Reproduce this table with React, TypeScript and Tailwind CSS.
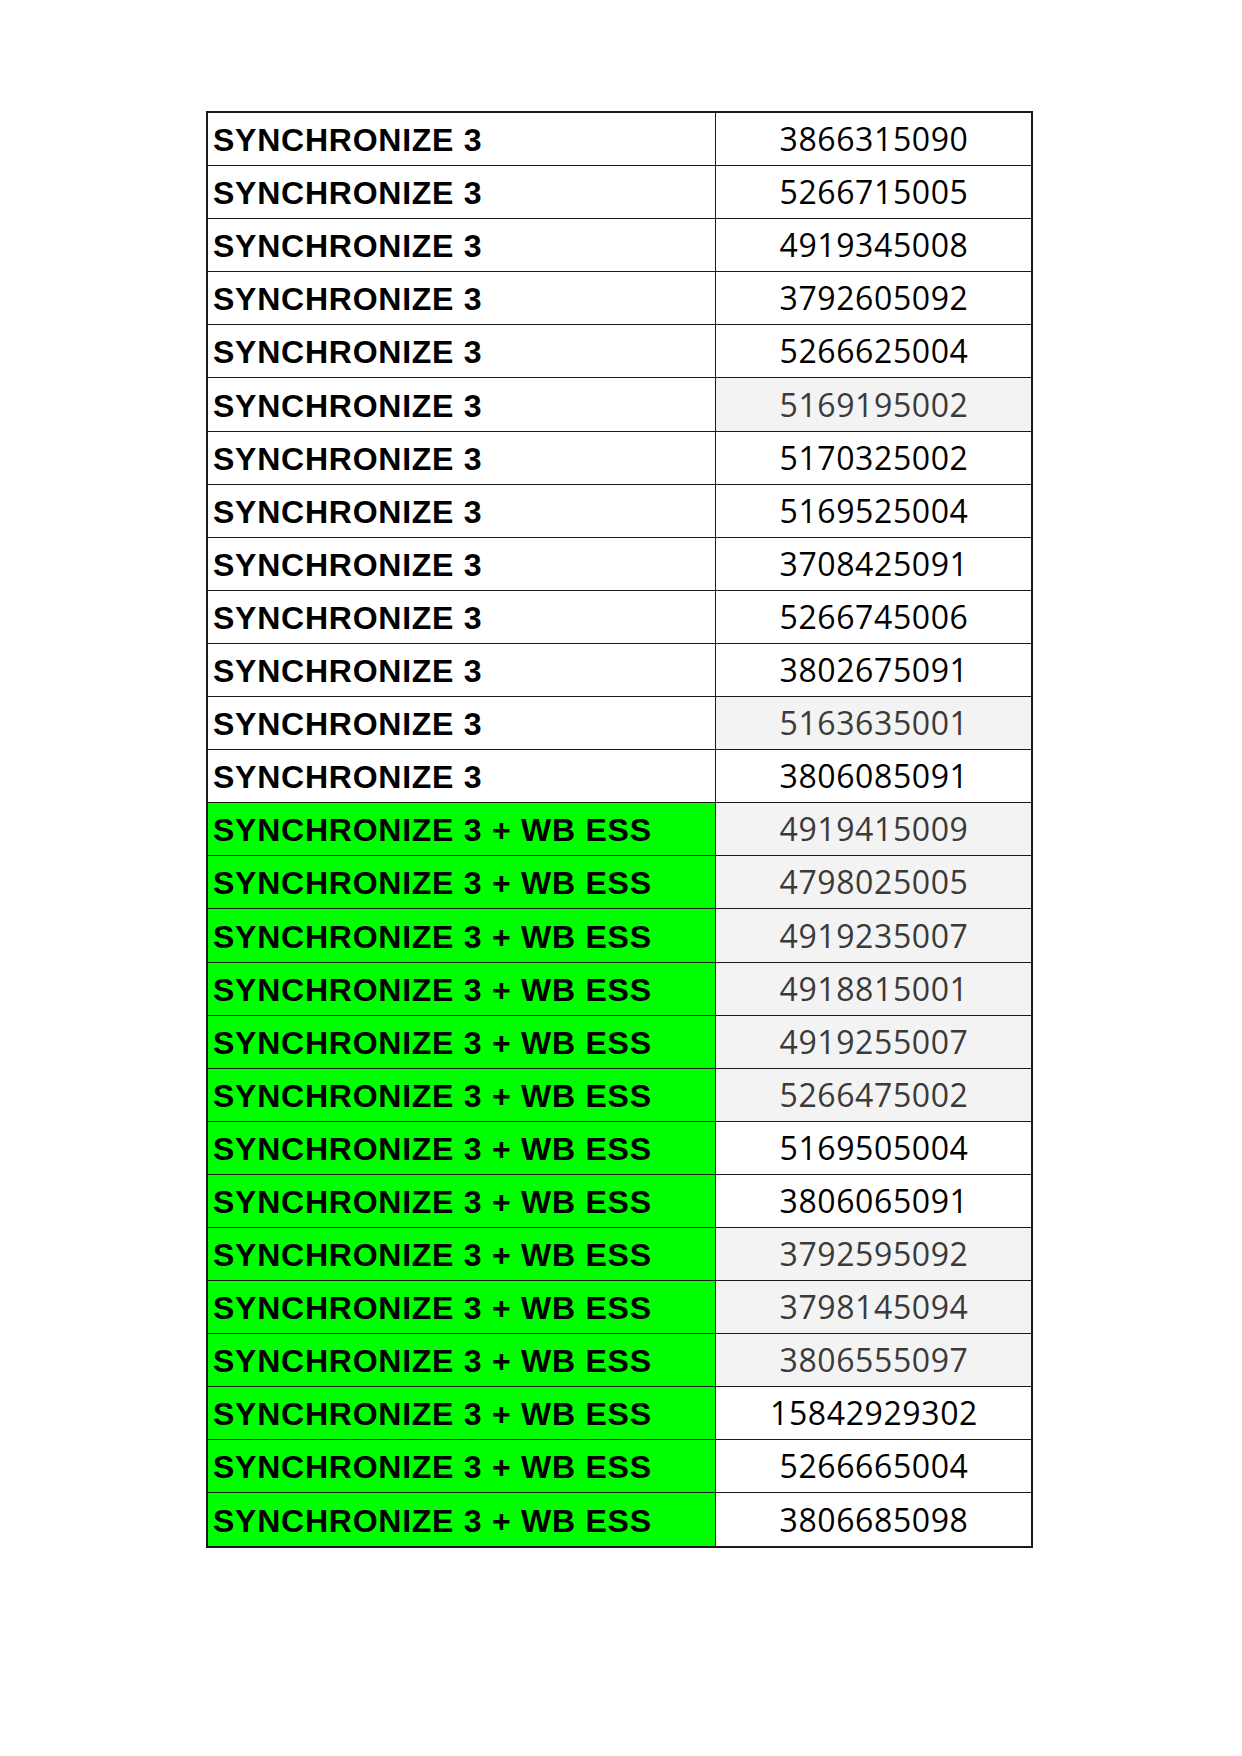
const rows: { name: string; code: string; green?: boolean; gray?: boolean }[] = [
  { name: "SYNCHRONIZE 3", code: "3866315090" },
  { name: "SYNCHRONIZE 3", code: "5266715005" },
  { name: "SYNCHRONIZE 3", code: "4919345008" },
  { name: "SYNCHRONIZE 3", code: "3792605092" },
  { name: "SYNCHRONIZE 3", code: "5266625004" },
  { name: "SYNCHRONIZE 3", code: "5169195002", gray: true },
  { name: "SYNCHRONIZE 3", code: "5170325002" },
  { name: "SYNCHRONIZE 3", code: "5169525004" },
  { name: "SYNCHRONIZE 3", code: "3708425091" },
  { name: "SYNCHRONIZE 3", code: "5266745006" },
  { name: "SYNCHRONIZE 3", code: "3802675091" },
  { name: "SYNCHRONIZE 3", code: "5163635001", gray: true },
  { name: "SYNCHRONIZE 3", code: "3806085091" },
  { name: "SYNCHRONIZE 3 + WB ESS", code: "4919415009", green: true, gray: true },
  { name: "SYNCHRONIZE 3 + WB ESS", code: "4798025005", green: true, gray: true },
  { name: "SYNCHRONIZE 3 + WB ESS", code: "4919235007", green: true, gray: true },
  { name: "SYNCHRONIZE 3 + WB ESS", code: "4918815001", green: true, gray: true },
  { name: "SYNCHRONIZE 3 + WB ESS", code: "4919255007", green: true, gray: true },
  { name: "SYNCHRONIZE 3 + WB ESS", code: "5266475002", green: true, gray: true },
  { name: "SYNCHRONIZE 3 + WB ESS", code: "5169505004", green: true },
  { name: "SYNCHRONIZE 3 + WB ESS", code: "3806065091", green: true },
  { name: "SYNCHRONIZE 3 + WB ESS", code: "3792595092", green: true, gray: true },
  { name: "SYNCHRONIZE 3 + WB ESS", code: "3798145094", green: true, gray: true },
  { name: "SYNCHRONIZE 3 + WB ESS", code: "3806555097", green: true, gray: true },
  { name: "SYNCHRONIZE 3 + WB ESS", code: "15842929302", green: true },
  { name: "SYNCHRONIZE 3 + WB ESS", code: "5266665004", green: true },
  { name: "SYNCHRONIZE 3 + WB ESS", code: "3806685098", green: true },
];

export default function App() {
  return (
    <div className="w-[1242px] h-[1756px] bg-white pt-[111px] pl-[206px]">
      <div className="w-[827px] border-2 border-[#1a1a1a] border-b-[1px]">
        {rows.map((r, i) => (
          <div key={i} className="flex h-[53.1px] border-b-[1.5px] border-[#1a1a1a]">
            <div
              className={`w-[508px] shrink-0 border-r-[1.5px] border-[#1a1a1a] pl-[5px] flex items-end pb-[5px] ${
                r.green ? "bg-[#00ff00]" : "bg-white"
              }`}
            >
              <span className="font-['Liberation_Sans',Arial,sans-serif] font-bold text-[32px] leading-[40px] tracking-[0.75px] text-black">
                {r.name}
              </span>
            </div>
            <div
              className={`flex-1 flex items-end justify-center pb-[6px] pl-[1px] ${
                r.gray ? "bg-[#f3f3f3] text-[#3a3a3a]" : "bg-white text-black"
              }`}
            >
              <span className="font-['Open_Sans',sans-serif] text-[32px] leading-[40px] tracking-[0.6px]">{r.code}</span>
            </div>
          </div>
        ))}
      </div>
    </div>
  );
}
